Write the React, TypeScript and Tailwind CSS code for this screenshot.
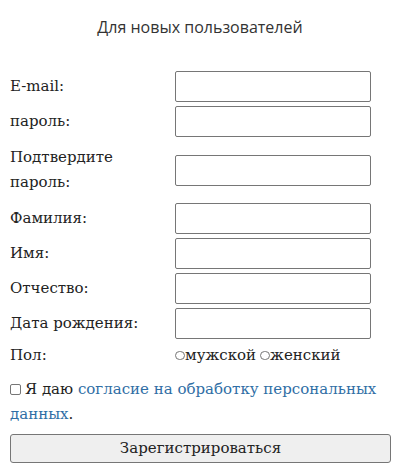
import React from "react";

const serif = { fontFamily: '"DejaVu Serif", "Liberation Serif", serif' };

function Field({ label }: { label: React.ReactNode }) {
  return (
    <>
      <label className="text-[15px] leading-[25px] text-[#222]">{label}</label>
      <input
        type="text"
        className="h-[31px] w-[196px] rounded-[2px] border border-[#767676] bg-white"
      />
    </>
  );
}

function Radio({ label }: { label: string }) {
  return (
    <span className="inline-flex items-center">
      <span className="inline-block h-[9px] w-[10px] rounded-full border border-[#767676] bg-white" />
      <span>{label}</span>
    </span>
  );
}

export default function App() {
  return (
    <main className="min-h-[472px] w-[400px] bg-white px-[10px]" style={serif}>
      <h1
        className="pt-[16px] text-center text-[16px] leading-[22px] text-[#333]"
        style={{ fontFamily: '"Open Sans", Arial, sans-serif' }}
      >
        Для новых пользователей
      </h1>

      <div className="mt-[33px] grid grid-cols-[165px_196px] items-center gap-y-[4px]">
        <Field label="E-mail:" />
        <Field label="пароль:" />
        <label className="py-[4px] text-[15px] leading-[25px] text-[#222]">
          Подтвердите
          <br />
          пароль:
        </label>
        <input
          type="password"
          className="h-[31px] w-[196px] rounded-[2px] border border-[#767676] bg-white"
        />
        <Field label="Фамилия:" />
        <Field label="Имя:" />
        <Field label="Отчество:" />
        <Field label="Дата рождения:" />
        <span className="text-[15px] leading-[25px] text-[#222]">Пол:</span>
        <span className="flex gap-[4px] text-[15px] leading-[25px] text-[#222]">
          <Radio label="мужской" />
          <Radio label="женский" />
        </span>
      </div>

      <p className="mt-[9px] text-[15px] leading-[25px] text-[#222]">
        <span className="mr-[4px] inline-block h-[11px] w-[11px] rounded-[2px] border border-[#767676] bg-white align-[-1px]" />
        Я даю{" "}
        <a href="#" className="text-[#2f6ea5]">
          согласие на обработку персональных данных
        </a>
        .
      </p>

      <button className="mt-[7px] h-[29px] w-[381px] rounded-[3px] border border-[#767676] bg-[#efefef] text-[15px] leading-[25px] text-[#222]">
        Зарегистрироваться
      </button>
    </main>
  );
}
